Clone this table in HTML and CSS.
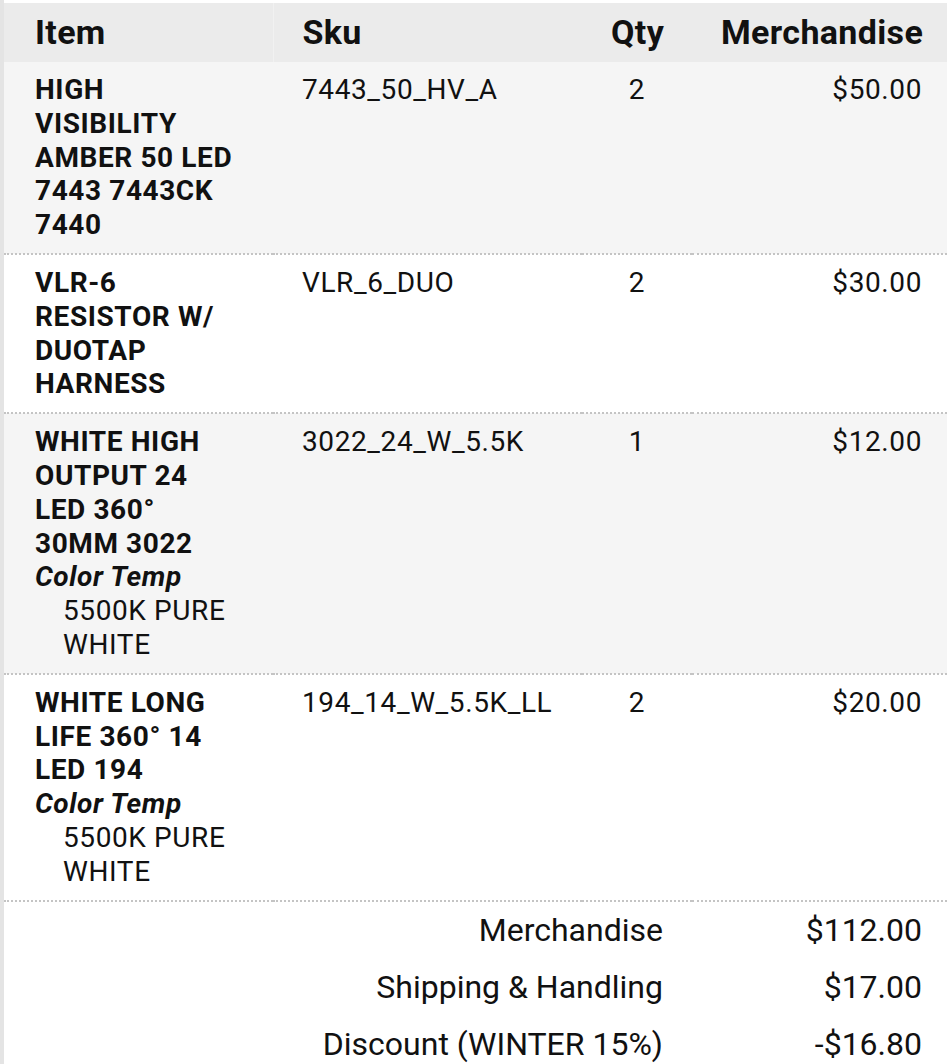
FILE: index.html
```html
<!DOCTYPE html>
<html>
<head>
<meta charset="utf-8">
<link rel="stylesheet" href="styles.css">
</head>
<body>
<div class="wrap">
<table class="cart">
  <colgroup>
    <col class="c-item"><col class="c-sku"><col class="c-qty"><col class="c-merch">
  </colgroup>
  <thead>
    <tr>
      <th class="item h-item">Item</th>
      <th class="sku">Sku</th>
      <th class="qty">Qty</th>
      <th class="merch">Merchandise</th>
    </tr>
  </thead>
  <tbody>
    <tr class="row alt">
      <td class="item"><span class="name">HIGH VISIBILITY AMBER 50 LED 7443 7443CK 7440</span></td>
      <td class="sku">7443_50_HV_A</td>
      <td class="qty">2</td>
      <td class="merch">$50.00</td>
    </tr>
    <tr class="row">
      <td class="item"><span class="name">VLR-6 RESISTOR W/ DUOTAP HARNESS</span></td>
      <td class="sku">VLR_6_DUO</td>
      <td class="qty">2</td>
      <td class="merch">$30.00</td>
    </tr>
    <tr class="row alt">
      <td class="item"><span class="name">WHITE HIGH OUTPUT 24 LED 360° 30MM 3022</span>
        <div class="opt-label">Color Temp</div>
        <div class="opt-val">5500K PURE WHITE</div>
      </td>
      <td class="sku">3022_24_W_5.5K</td>
      <td class="qty">1</td>
      <td class="merch">$12.00</td>
    </tr>
    <tr class="row">
      <td class="item"><span class="name">WHITE LONG LIFE 360° 14 LED 194</span>
        <div class="opt-label">Color Temp</div>
        <div class="opt-val">5500K PURE WHITE</div>
      </td>
      <td class="sku">194_14_W_5.5K_LL</td>
      <td class="qty">2</td>
      <td class="merch">$20.00</td>
    </tr>
  </tbody>
  <tfoot>
    <tr class="total first">
      <td class="tlabel" colspan="3">Merchandise</td>
      <td class="tval">$112.00</td>
    </tr>
    <tr class="total">
      <td class="tlabel" colspan="3">Shipping &amp; Handling</td>
      <td class="tval">$17.00</td>
    </tr>
    <tr class="total">
      <td class="tlabel" colspan="3">Discount (WINTER 15%)</td>
      <td class="tval">-$16.80</td>
    </tr>
  </tfoot>
</table>
</div>
</body>
</html>
```
FILE: styles.css
```css
html, body {
  margin: 0;
  padding: 0;
  background: #ffffff;
}
body {
  font-family: Roboto, "Liberation Sans", sans-serif;
  color: #111111;
  overflow: hidden;
}
.wrap {
  border-left: 4px solid #e4e4e4;
  padding-top: 3px;
  min-height: 1064px;
  box-sizing: border-box;
}
.cart {
  width: 100%;
  border-collapse: collapse;
  table-layout: fixed;
  font-size: 28px;
  line-height: 33.8px;
  letter-spacing: 0.6px;
}
.c-item { width: 269px; }
.c-sku { width: 309px; }
.c-qty { width: 110px; }
.c-merch { width: auto; }

th, td {
  padding: 0 29px;
  vertical-align: top;
  text-align: left;
}
.item { padding-left: 31px; padding-right: 36px; }
.qty { text-align: center; }
.merch { text-align: right; padding-right: 25px; }

thead th {
  background: #ebebeb;
  font-size: 34px;
  font-weight: 700;
  line-height: 59px;
  letter-spacing: 0.35px;
}
.h-item { border-right: 1px solid #f1f1f1; }

.row td {
  padding-top: 11px;
  padding-bottom: 11px;
  border-top: 2px dotted #c4c4c4;
}
.row:first-child td { border-top: none; }
.row.alt td { background: #f5f5f5; }

.name { font-weight: 700; }
.opt-label {
  font-weight: 700;
  font-style: italic;
}
.opt-val {
  padding-left: 28px;
}

.total td {
  font-size: 32px;
  line-height: 57px;
  letter-spacing: 0;
  padding-top: 0;
  padding-bottom: 0;
}
.total.first td { border-top: 2px dotted #c4c4c4; }
.tlabel { text-align: right; }
.tval { text-align: right; padding-right: 25px; }
```
